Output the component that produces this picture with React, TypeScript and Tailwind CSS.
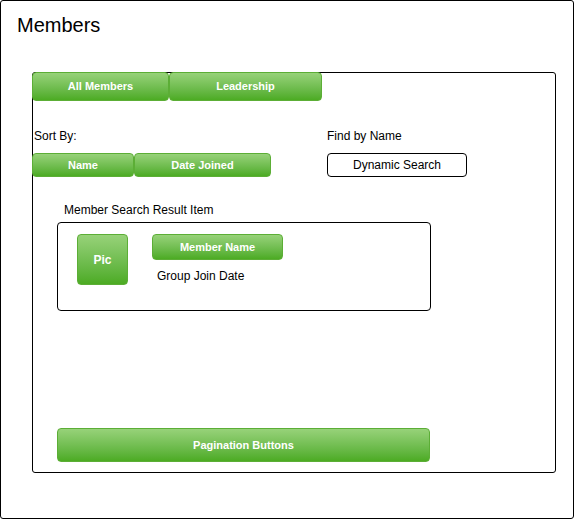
const greenBtn =
  "flex items-center justify-center rounded-[4px] border border-[#5cae36] bg-gradient-to-b from-[#97d279] to-[#4cab22] text-[11px] font-bold text-white"

const App = () => {
  return (
    <div className="w-[575px] h-[520px] bg-white font-['Liberation_Sans',Arial,sans-serif] text-black">
      <div className="w-[574px] h-[519px] border border-black rounded-[3px] pt-[12px] pl-[16px]">
        <h1 className="text-[20px] leading-[24px] font-normal">Members</h1>

        <div className="mt-[35px] ml-[15px] w-[524px] h-[401px] border border-black rounded-[3px]">
          <div className="flex -ml-px -mt-px">
            <div className={`${greenBtn} w-[137px] h-[29px]`}>All Members</div>
            <div className={`${greenBtn} w-[153px] h-[29px]`}>Leadership</div>
          </div>

          <div className="flex -ml-px mt-[28px]">
            <div className="w-[295px]">
              <p className="pl-[2px] text-[12px] leading-[14px]">Sort By:</p>
              <div className="flex mt-[10px]">
                <div className={`${greenBtn} w-[102px] h-[24px]`}>Name</div>
                <div className={`${greenBtn} w-[137px] h-[24px]`}>Date Joined</div>
              </div>
            </div>
            <div>
              <p className="text-[12px] leading-[14px]">Find by Name</p>
              <div className="mt-[10px] w-[140px] h-[24px] border border-black rounded-[4px] flex items-center justify-center text-[12px]">
                Dynamic Search
              </div>
            </div>
          </div>

          <p className="ml-[31px] mt-[26px] text-[12px] leading-[14px]">Member Search Result Item</p>

          <div className="ml-[24px] mt-[5px] w-[374px] h-[89px] border border-black rounded-[4px] flex pl-[19px] pt-[11px]">
            <div className={`${greenBtn} w-[51px] h-[51px] text-[12px]`}>Pic</div>
            <div className="ml-[24px]">
              <div className={`${greenBtn} w-[131px] h-[26px]`}>Member Name</div>
              <p className="ml-[5px] mt-[9px] text-[12px] leading-[14px]">Group Join Date</p>
            </div>
          </div>

          <div className={`${greenBtn} ml-[24px] mt-[117px] w-[373px] h-[34px]`}>Pagination Buttons</div>
        </div>
      </div>
    </div>
  )
}

export default App
